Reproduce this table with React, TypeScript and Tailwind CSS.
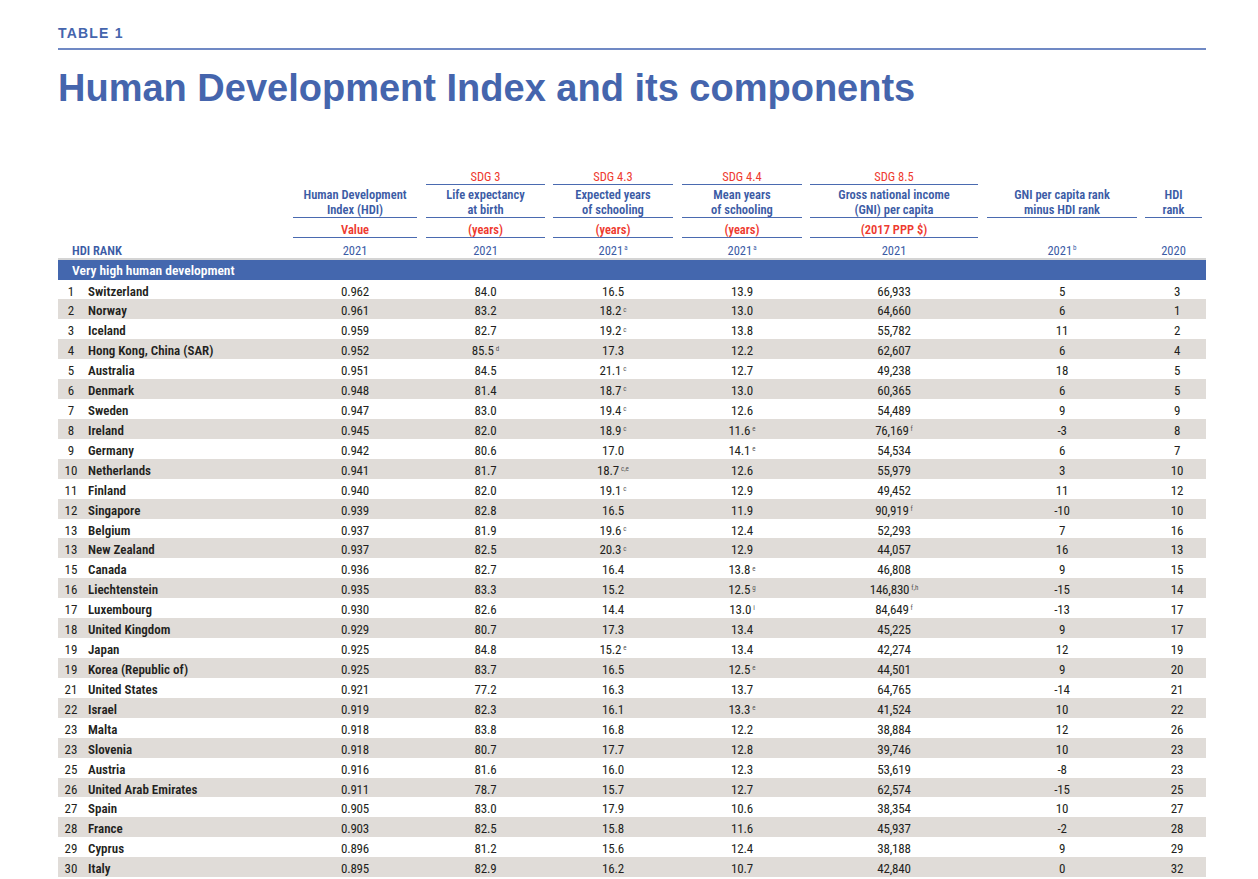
import React from "react";

type Col = {
  sdg?: string;
  title: [string, string];
  unit?: string;
  year: string;
  yearSup?: string;
  pad: string;
};

const cols: Col[] = [
  { title: ["Human Development", "Index (HDI)"], unit: "Value", year: "2021", pad: "pr-[9px]" },
  { sdg: "SDG 3", title: ["Life expectancy", "at birth"], unit: "(years)", year: "2021", pad: "pr-[8px]" },
  { sdg: "SDG 4.3", title: ["Expected years", "of schooling"], unit: "(years)", year: "2021", yearSup: "a", pad: "pr-[9px]" },
  { sdg: "SDG 4.4", title: ["Mean years", "of schooling"], unit: "(years)", year: "2021", yearSup: "a", pad: "pr-[8px]" },
  { sdg: "SDG 8.5", title: ["Gross national income", "(GNI) per capita"], unit: "(2017 PPP $)", year: "2021", pad: "pr-[9px]" },
  { title: ["GNI per capita rank", "minus HDI rank"], year: "2021", yearSup: "b", pad: "pr-[8px]" },
  { title: ["HDI", "rank"], year: "2020", pad: "pr-[4px]" },
];

const dataPads = ["pr-[9px]", "pr-[8px]", "pr-[9px]", "pr-[8px]", "pr-[9px]", "pr-[8px]", "pl-[3px]"];

const rows: string[][] = [
  ["1", "Switzerland", "0.962", "84.0", "16.5", "13.9", "66,933", "5", "3"],
  ["2", "Norway", "0.961", "83.2", "18.2|c", "13.0", "64,660", "6", "1"],
  ["3", "Iceland", "0.959", "82.7", "19.2|c", "13.8", "55,782", "11", "2"],
  ["4", "Hong Kong, China (SAR)", "0.952", "85.5|d", "17.3", "12.2", "62,607", "6", "4"],
  ["5", "Australia", "0.951", "84.5", "21.1|c", "12.7", "49,238", "18", "5"],
  ["6", "Denmark", "0.948", "81.4", "18.7|c", "13.0", "60,365", "6", "5"],
  ["7", "Sweden", "0.947", "83.0", "19.4|c", "12.6", "54,489", "9", "9"],
  ["8", "Ireland", "0.945", "82.0", "18.9|c", "11.6|e", "76,169|f", "-3", "8"],
  ["9", "Germany", "0.942", "80.6", "17.0", "14.1|e", "54,534", "6", "7"],
  ["10", "Netherlands", "0.941", "81.7", "18.7|c,e", "12.6", "55,979", "3", "10"],
  ["11", "Finland", "0.940", "82.0", "19.1|c", "12.9", "49,452", "11", "12"],
  ["12", "Singapore", "0.939", "82.8", "16.5", "11.9", "90,919|f", "-10", "10"],
  ["13", "Belgium", "0.937", "81.9", "19.6|c", "12.4", "52,293", "7", "16"],
  ["13", "New Zealand", "0.937", "82.5", "20.3|c", "12.9", "44,057", "16", "13"],
  ["15", "Canada", "0.936", "82.7", "16.4", "13.8|e", "46,808", "9", "15"],
  ["16", "Liechtenstein", "0.935", "83.3", "15.2", "12.5|g", "146,830|f,h", "-15", "14"],
  ["17", "Luxembourg", "0.930", "82.6", "14.4", "13.0|i", "84,649|f", "-13", "17"],
  ["18", "United Kingdom", "0.929", "80.7", "17.3", "13.4", "45,225", "9", "17"],
  ["19", "Japan", "0.925", "84.8", "15.2|e", "13.4", "42,274", "12", "19"],
  ["19", "Korea (Republic of)", "0.925", "83.7", "16.5", "12.5|e", "44,501", "9", "20"],
  ["21", "United States", "0.921", "77.2", "16.3", "13.7", "64,765", "-14", "21"],
  ["22", "Israel", "0.919", "82.3", "16.1", "13.3|e", "41,524", "10", "22"],
  ["23", "Malta", "0.918", "83.8", "16.8", "12.2", "38,884", "12", "26"],
  ["23", "Slovenia", "0.918", "80.7", "17.7", "12.8", "39,746", "10", "23"],
  ["25", "Austria", "0.916", "81.6", "16.0", "12.3", "53,619", "-8", "23"],
  ["26", "United Arab Emirates", "0.911", "78.7", "15.7", "12.7", "62,574", "-15", "25"],
  ["27", "Spain", "0.905", "83.0", "17.9", "10.6", "38,354", "10", "27"],
  ["28", "France", "0.903", "82.5", "15.8", "11.6", "45,937", "-2", "28"],
  ["29", "Cyprus", "0.896", "81.2", "15.6", "12.4", "38,188", "9", "29"],
  ["30", "Italy", "0.895", "82.9", "16.2", "10.7", "42,840", "0", "32"],
];

const GRID = "grid grid-cols-[26px_209px_133px_127px_129px_128px_177px_158px_61px]";

function Val({ v }: { v: string }) {
  const [n, s] = v.split("|");
  return (
    <span>
      {n}
      {s && <sup className="text-[7px] ml-[2px] tracking-normal text-[#555] top-[-0.55em]">{s}</sup>}
    </span>
  );
}

export default function App() {
  return (
    <div className="w-[1258px] h-[879px] overflow-hidden bg-white pl-[58px] pr-[52px] pt-[26px] font-['Roboto',sans-serif] font-stretch-[75%] text-[#231f20]">
      <div className="font-['Liberation_Sans',Arial,sans-serif] font-stretch-normal text-[14px] leading-[14px] font-bold tracking-[1.2px] text-[#4565ad]">
        TABLE 1
      </div>
      <div className="mt-[8px] h-[1.5px] bg-[#7089c4]" />
      <h1 className="mt-[19px] font-['Liberation_Sans',Arial,sans-serif] font-stretch-normal text-[38px] leading-[38px] font-bold text-[#4565ad]">
        Human Development Index and its components
      </h1>

      {/* Header */}
      <div className={`${GRID} mt-[62px]`}>
        <div className="col-span-2 flex flex-col justify-end">
          <div className="h-[20px] pl-[14px] pt-[5px] leading-[16px] text-[12.5px] font-semibold text-[#3b5ba5]">HDI RANK</div>
        </div>
        {cols.map((c, i) => (
          <div key={i} className={c.pad}>
            <div className={`h-[16px] text-center text-[12.5px] leading-[15px] text-[#ee3a2f] ${c.sdg ? "border-b-[1.5px] border-[#4a6ab0]" : ""}`}>
              {c.sdg}
            </div>
            <div className="h-[33px] pt-[2px] text-center text-[12.5px] leading-[15px] font-semibold whitespace-nowrap text-[#3b5ba5] border-b-[1.5px] border-[#4a6ab0]">
              <div>{c.title[0]}</div>
              <div>{c.title[1]}</div>
            </div>
            <div className={`h-[20px] pt-[4px] text-center text-[12.5px] leading-[16px] font-semibold text-[#ee3a2f] ${c.unit ? "border-b-[1.5px] border-[#4a6ab0]" : ""}`}>
              {c.unit}
            </div>
            <div className="h-[20px] pt-[5px] text-center text-[12.5px] leading-[16px] text-[#3b5ba5]">
              {c.year}
              {c.yearSup && <sup className="text-[7px] ml-[1px] top-[-0.6em]">{c.yearSup}</sup>}
            </div>
          </div>
        ))}
      </div>

      {/* Band */}
      <div className="border-t-[2px] border-[#d4d4d4] bg-[#4467ae] h-[22px] pl-[14px] text-white font-semibold text-[13.5px] leading-[20px]">
        Very high human development
      </div>

      {/* Rows */}
      <div>
        {rows.map((r, i) => (
          <div
            key={i}
            className={`${GRID} h-[19.93px] pt-[2px] items-center text-[13px] leading-[19px] ${i % 2 === 1 ? "bg-[#e0dcd8]" : ""}`}
          >
            <div className="text-center">{r[0]}</div>
            <div className="pl-[4px] font-semibold whitespace-nowrap">{r[1]}</div>
            {r.slice(2).map((v, j) => (
              <div key={j} className={`text-center tracking-[-0.2px] ${dataPads[j]}`}>
                <Val v={v} />
              </div>
            ))}
          </div>
        ))}
      </div>
    </div>
  );
}
